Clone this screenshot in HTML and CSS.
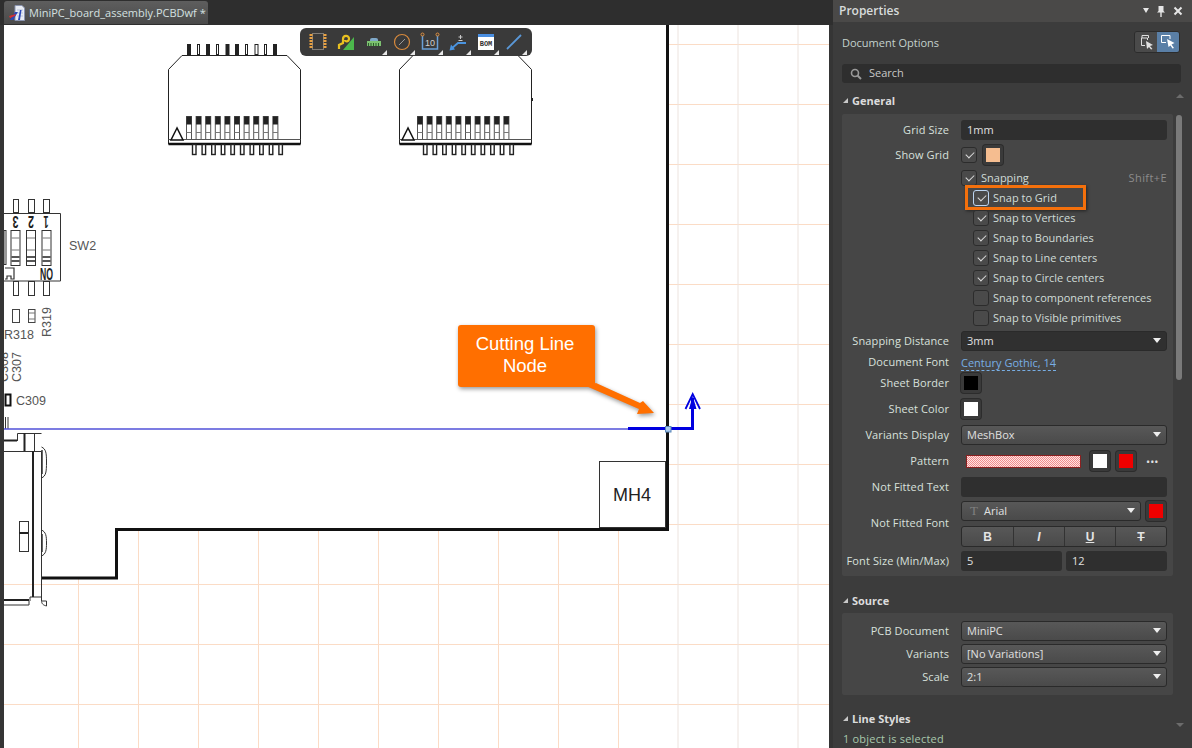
FILE: index.html
```html
<!DOCTYPE html>
<html lang="en">
<head>
  <meta charset="UTF-8" />
  <title>MiniPC_board_assembly.PCBDwf</title>
  <link rel="stylesheet" href="styles.css">
</head>
<body>
<div class="app">

  <div class="editor">
    <div class="tabbar">
      <div class="tab">
        <svg class="tab-icon" width="16" height="16" viewBox="0 0 16 16">
          <path d="M6 0.500h7l2.500 2.500v12.500h-9.500z" fill="#e8ecf4" stroke="#8a94b0"/>
          <path d="M8 5h6M8 8h6M8 11h6" stroke="#b8c4dc"/>
          <path d="M1 15 L6 7 L9 7 L4 15z" fill="#2a48b8"/>
          <path d="M0 11 L7 9 L6 11 L1 13z" fill="#d83030"/>
          <path d="M9 15 L11 5 L12.500 5 L11 15z" fill="#2a48b8"/>
        </svg>
        <span>MiniPC_board_assembly.PCBDwf *</span>
      </div>
    </div>

    <div class="canvas">
      <svg class="sheet" width="825" height="723" viewBox="4 25 825 723">
        <defs>
          <g id="conn">
            <path d="M182 55.500H287L300.500 69.500V144H168.500V69.500z" fill="#fff" stroke="#222" stroke-width="1"/>
            <path d="M168.500 139.500H300.500" stroke="#555" stroke-width="1"/>
            <path d="M168.500 144H300.500" stroke="#111" stroke-width="2.500"/>
            <path d="M177 128L171 140H183z" fill="#fff" stroke="#111" stroke-width="1.500"/>
            <g fill="#fff" stroke="#222" stroke-width="1">
              <rect x="187.500" y="44.500" width="3" height="10" fill="#222"/>
              <rect x="197.500" y="44.500" width="2" height="10"/>
              <rect x="206.500" y="44.500" width="3" height="10" fill="#222"/>
              <rect x="216.500" y="44.500" width="2" height="10"/>
              <rect x="226" y="44.500" width="3" height="10" fill="#222"/>
              <rect x="235.500" y="44.500" width="3" height="10" fill="#222"/>
              <rect x="245.500" y="44.500" width="2" height="10"/>
              <rect x="255" y="44.500" width="3" height="10"/>
              <rect x="264.500" y="44.500" width="2" height="10"/>
              <rect x="273.500" y="44.500" width="3" height="10" fill="#222"/>
            </g>
            <g id="low-pin">
              <rect x="186.500" y="116.500" width="5" height="23" fill="#fff" stroke="#555"/>
              <rect x="186.500" y="116.500" width="5" height="8" fill="#222"/>
              <path d="M186.500 132.500H191.500" stroke="#777"/>
              <rect x="192.500" y="144.500" width="3.500" height="10" fill="#fff" stroke="#222" stroke-width="1.400"/>
            </g>
            <use href="#low-pin" x="9.600"/>
            <use href="#low-pin" x="19.200"/>
            <use href="#low-pin" x="28.800"/>
            <use href="#low-pin" x="38.400"/>
            <use href="#low-pin" x="48"/>
            <use href="#low-pin" x="57.600"/>
            <use href="#low-pin" x="67.200"/>
            <use href="#low-pin" x="76.800"/>
            <use href="#low-pin" x="86.400"/>
          </g>
          <g id="dip">
            <rect x="-4.500" y="0.500" width="9" height="35" fill="#fff" stroke="#333"/>
            <path d="M-4 8H4M-4 20H4" stroke="#777"/>
            <path d="M-4 27H4M-4 31H4" stroke="#222" stroke-width="1.500"/>
          </g>
        </defs>

        <!-- grid -->
        <rect x="4" y="25" width="825" height="723" fill="#fff"/>
        <g class="grid">
          <path d="M4 44.500H829M4 104.500H829M4 164.500H829M4 224.500H829M4 284.500H829M4 344.500H829M4 404.500H829M4 464.500H829M4 524.500H829M4 584.500H829M4 644.500H829M4 704.500H829"/>
          <path d="M78.500 25V748M138.500 25V748M198.500 25V748M258.500 25V748M318.500 25V748M378.500 25V748M438.500 25V748M498.500 25V748M558.500 25V748M618.500 25V748"/>
        </g>
        <path class="grid-pale" d="M678 25V748M738 25V748M798 25V748"/>
        <path d="M4 25H667V530H117V578H4z" fill="#fff"/>

        <!-- connectors -->
        <use href="#conn"/>
        <use href="#conn" x="231"/>
        <rect x="531" y="98" width="2" height="3" fill="#222"/>

        <!-- SW2 -->
        <path d="M4 213.500H60.500V281H4" fill="#fff" stroke="#333"/>
        <g fill="#fff" stroke="#333">
          <rect x="13.500" y="199.500" width="5" height="13"/>
          <rect x="28.500" y="199.500" width="6" height="13"/>
          <rect x="43.500" y="199.500" width="6" height="13"/>
          <rect x="13.500" y="281.500" width="5" height="14"/>
          <rect x="28.500" y="281.500" width="6" height="14"/>
          <rect x="43.500" y="281.500" width="6" height="14"/>
          <rect x="4" y="230.500" width="2" height="34"/>
        </g>
        <use href="#dip" x="15.500" y="230"/>
        <use href="#dip" x="31" y="230"/>
        <use href="#dip" x="46.500" y="230"/>
        <text class="pcb-bold" transform="rotate(180 15.500 222)" x="15.500" y="228" textLength="6" lengthAdjust="spacingAndGlyphs">3</text>
        <text class="pcb-bold" transform="rotate(180 31 222)" x="31" y="228" textLength="6" lengthAdjust="spacingAndGlyphs">2</text>
        <text class="pcb-bold" transform="rotate(180 46 222)" x="46" y="228" textLength="5" lengthAdjust="spacingAndGlyphs">1</text>
        <text class="pcb-bold" transform="rotate(180 46.500 273.500)" x="46.500" y="279" textLength="13" lengthAdjust="spacingAndGlyphs">ON</text>
        <path d="M5 268H14V279H11V276H7V279H5" fill="none" stroke="#333" stroke-width="1.200"/>
        <text class="pcb" x="69" y="250">SW2</text>

        <!-- resistors and caps -->
        <rect x="12.500" y="309.500" width="7" height="13" fill="#fff" stroke="#444"/>
        <rect x="28.500" y="309.500" width="6.500" height="13" fill="#fff" stroke="#444"/>
        <path d="M29 313H35M29 319H35" stroke="#777"/>
        <text class="pcb" x="4" y="339">R318</text>
        <text class="pcb" transform="rotate(-90 51 337)" x="51" y="337">R319</text>
        <text class="pcb" transform="rotate(-90 21 382)" x="21" y="382">C307</text>
        <text class="pcb" transform="rotate(-90 8 382)" x="8" y="382">C308</text>
        <rect x="5.500" y="394.500" width="5" height="11" fill="#fff" stroke="#111" stroke-width="2"/>
        <text class="pcb" x="16" y="405">C309</text>

        <!-- mechanical part -->
        <g fill="none" stroke="#333">
          <path d="M5.500 417V429M8 417V429"/>
          <path d="M4 451.500H41.500V597M17.500 441V433.500H41.500M34.500 433.500V451"/>
          <path d="M41.500 447C46 449 46.500 453 46.500 462C46.500 472 46 476 41.500 478"/>
          <path d="M41.500 530C46 532 46.500 536 46.500 543C46.500 550 46 554 41.500 556"/>
          <rect x="19.500" y="521.500" width="9" height="30"/>
          <path d="M30 601V597H41.500V600C41.500 604 43 605 46.500 606V601H42"/>
          <path d="M4 605H29V601"/>
        </g>
        <path d="M4 440.500H17M24.500 433V451M33 451V597M19 533H28M4 600H29" fill="none" stroke="#222" stroke-width="2"/>
        <path d="M42 450V474M42 534V552" stroke="#333" stroke-width="1.500"/>

        <!-- board outline -->
        <path d="M667.500 25V529.500H116.500V578H42" fill="none" stroke="#111" stroke-width="3"/>

        <!-- MH4 -->
        <rect x="599.500" y="461.500" width="66" height="66" fill="#fff" stroke="#333"/>
        <text class="mh" x="632" y="501">MH4</text>

        <!-- cutting line -->
        <path d="M4 429H628" stroke="#5050d8" stroke-width="1.600"/>
        <path d="M628 428.500H692.500V398" fill="none" stroke="#0000e0" stroke-width="3"/>
        <path d="M685.500 409L692.700 394L700 409" fill="none" stroke="#0000e0" stroke-width="1.800"/>
        <path d="M692.700 396L689 409H696.500z" fill="#0000e0"/>
        <rect x="665.500" y="426.500" width="5.500" height="5.500" fill="#a9c9ee" stroke="#5a86b8"/>

        <!-- callout -->
        <g class="callout">
          <rect x="458" y="325" width="137" height="62" rx="3"/>
          <path d="M586 386L596 383L640 403L643 401L654 413L637 414L639 409z"/>
        </g>
        <text class="callout-text" x="525" y="350">Cutting Line</text>
        <text class="callout-text" x="525" y="372">Node</text>
      </svg>

      <div class="toolbar">
        <button class="tool">
          <svg width="20" height="20" viewBox="0 0 20 20">
            <rect x="4.500" y="1.500" width="11" height="16" fill="none" stroke="#807d78"/>
            <path d="M3 2v15M17 2v15" stroke="#e8a040" stroke-width="3" stroke-dasharray="2 1"/>
          </svg>
        </button>
        <button class="tool">
          <svg width="20" height="20" viewBox="0 0 20 20">
            <path d="M18 5V18H7z" fill="#4cb84c"/>
            <path d="M3 17V13L7 11V7C7 3 13 3 13 6.500C13 10 9 10 9 8" fill="none" stroke="#e8c020" stroke-width="2.200"/>
          </svg>
        </button>
        <button class="tool has-menu">
          <svg width="20" height="20" viewBox="0 0 20 20">
            <path d="M6 9V7.500Q6 6 8 6H12Q14 6 14 7.500V9z" fill="#7fa8c8"/>
            <rect x="3" y="9" width="14" height="5" fill="#7cc070"/>
            <path d="M4.500 11v3M7 11v3M9.500 11v3M12 11v3M14.500 11v3" stroke="#2a5a2a"/>
          </svg>
        </button>
        <button class="tool has-menu">
          <svg width="20" height="20" viewBox="0 0 20 20">
            <circle cx="10" cy="10" r="7.500" fill="none" stroke="#d88a3c" stroke-width="1.200"/>
            <path d="M7 13L13 7" stroke="#9a9a9a"/>
          </svg>
        </button>
        <button class="tool has-menu">
          <svg width="22" height="20" viewBox="0 0 22 20">
            <path d="M3.500 3V17H18.500V3" fill="none" stroke="#6aa0d8" stroke-width="1.500"/>
            <circle cx="3.500" cy="2.500" r="1.500" fill="#3a3a3a" stroke="#e09040"/>
            <circle cx="18.500" cy="2.500" r="1.500" fill="#3a3a3a" stroke="#e09040"/>
            <text class="tool-num" x="11" y="14">10</text>
          </svg>
        </button>
        <button class="tool has-menu">
          <svg width="20" height="20" viewBox="0 0 20 20">
            <path d="M3 17L10 11H18" fill="none" stroke="#4a94e0" stroke-width="1.800"/>
            <path d="M1.500 18.500L3 12.500L7 17.500z" fill="#4a94e0"/>
            <path d="M12.500 3V7M10.500 5H14.500M10.500 8.500H14.500" stroke="#c8c8c8"/>
          </svg>
        </button>
        <button class="tool has-menu">
          <svg width="20" height="20" viewBox="0 0 20 20">
            <rect x="2" y="2" width="16" height="16" fill="#fff"/>
            <rect x="2" y="2" width="16" height="3" fill="#4a8ee0"/>
            <text class="tool-bom" x="10" y="14">BOM</text>
          </svg>
        </button>
        <button class="tool has-menu">
          <svg width="20" height="20" viewBox="0 0 20 20">
            <path d="M3 17L17 3" stroke="#5a98d8" stroke-width="1.800"/>
          </svg>
        </button>
      </div>
    </div>
  </div>

  <aside class="panel">
    <header class="panel-title">
      <span>Properties</span>
      <div class="panel-actions">
        <i class="caret-white"></i>
        <svg width="10" height="12" viewBox="0 0 10 12"><path d="M2.500 1H7.500V6L9 7.500H1L2.500 6zM4.300 7.500H5.700V12H4.300z" fill="#e6e6e6"/></svg>
        <svg width="10" height="10" viewBox="0 0 10 10"><path d="M1.500 1.500L8.500 8.500M8.500 1.500L1.500 8.500" stroke="#e6e6e6" stroke-width="2"/></svg>
      </div>
    </header>

    <div class="doc-options">
      <span>Document Options</span>
      <div class="toggle">
        <button class="toggle-btn">
          <svg width="16" height="16" viewBox="0 0 16 16">
            <path d="M4 4V1.500H10.500V4M3.500 4H9.500V6M3.500 4V11.500H7" fill="none" stroke="#e0e0e0"/>
            <path d="M8 7L15 11L12 12L14.500 15L13 15.500L11 13L9 15z" fill="#e0e0e0"/>
          </svg>
        </button>
        <button class="toggle-btn active">
          <svg width="16" height="16" viewBox="0 0 16 16">
            <path d="M6 8.500H1.500V1.500H10V5" fill="none" stroke="#fff"/>
            <path d="M7 5L14.500 9L11.500 10.500L14 14L12.500 14.500L10.500 11.500L8.500 13z" fill="#fff"/>
          </svg>
        </button>
      </div>
    </div>

    <div class="search">
      <svg width="12" height="12" viewBox="0 0 12 12"><circle cx="5" cy="5" r="3.500" fill="none" stroke="#9a9a9a" stroke-width="1.600"/><path d="M7.500 7.500L11 11" stroke="#9a9a9a" stroke-width="2"/></svg>
      <span>Search</span>
    </div>

    <div class="sec-head head-first"><i class="tri"></i>General</div>
    <section class="sec sec-general">
      <div class="row">
        <label>Grid Size</label>
        <div class="input">1mm</div>
      </div>
      <div class="row row-showgrid">
        <label>Show Grid</label>
        <div class="inline">
          <span class="check on"></span>
          <span class="swatch sw-grid"></span>
        </div>
      </div>
      <div class="row row-snapping">
        <label></label>
        <div class="inline">
          <span class="check on"></span>
          <span class="check-text">Snapping</span>
          <span class="shortcut">Shift+E</span>
        </div>
      </div>
      <div class="snap-list">
        <div class="snap focused"><span class="check on focus"></span><span class="check-text">Snap to Grid</span></div>
        <div class="snap"><span class="check on"></span><span class="check-text">Snap to Vertices</span></div>
        <div class="snap"><span class="check on"></span><span class="check-text">Snap to Boundaries</span></div>
        <div class="snap"><span class="check on"></span><span class="check-text">Snap to Line centers</span></div>
        <div class="snap"><span class="check on"></span><span class="check-text">Snap to Circle centers</span></div>
        <div class="snap"><span class="check"></span><span class="check-text">Snap to component references</span></div>
        <div class="snap"><span class="check"></span><span class="check-text">Snap to Visible primitives</span></div>
      </div>
      <div class="row">
        <label>Snapping Distance</label>
        <div class="select dark">3mm</div>
      </div>
      <div class="row row-font">
        <label>Document Font</label>
        <div><a class="link">Century Gothic, 14</a></div>
      </div>
      <div class="row">
        <label>Sheet Border</label>
        <div class="inline"><span class="swatch sw-black"></span></div>
      </div>
      <div class="row">
        <label>Sheet Color</label>
        <div class="inline"><span class="swatch sw-white"></span></div>
      </div>
      <div class="row">
        <label>Variants Display</label>
        <div class="select">MeshBox</div>
      </div>
      <div class="row">
        <label>Pattern</label>
        <div class="pattern-row">
          <span class="pattern"></span>
          <span class="swatch sw-white"></span>
          <span class="swatch sw-red"></span>
          <span class="dots">•••</span>
        </div>
      </div>
      <div class="row">
        <label>Not Fitted Text</label>
        <div class="input"></div>
      </div>
      <div class="row row-fitted">
        <label>Not Fitted Font</label>
        <div class="fitted">
          <div class="inline font-line">
            <div class="select font-select"><span class="t-icon">T</span>Arial</div>
            <span class="swatch sw-red"></span>
          </div>
          <div class="btn-group">
            <span class="b">B</span>
            <span class="i">I</span>
            <span class="u">U</span>
            <span class="s">T</span>
          </div>
        </div>
      </div>
      <div class="row">
        <label>Font Size (Min/Max)</label>
        <div class="two">
          <div class="input">5</div>
          <div class="input">12</div>
        </div>
      </div>
    </section>

    <div class="sec-head sec-gap"><i class="tri"></i>Source</div>
    <section class="sec sec-source">
      <div class="row row-src">
        <label>PCB Document</label>
        <div class="select">MiniPC</div>
      </div>
      <div class="row row-src">
        <label>Variants</label>
        <div class="select">[No Variations]</div>
      </div>
      <div class="row row-src">
        <label>Scale</label>
        <div class="select">2:1</div>
      </div>
    </section>

    <div class="sec-head head-last"><i class="tri"></i>Line Styles</div>

    <footer class="status">1 object is selected</footer>

    <div class="scroll-up"></div>
    <div class="scroll-thumb"></div>
    <div class="scroll-down"></div>
  </aside>

</div>
</body>
</html>
```

FILE: styles.css
```css
* {
  box-sizing: border-box;
}
html, body {
  margin: 0;
  padding: 0;
  height: 748px;
  overflow: hidden;
  background: #333;
}
body {
  font-family: "Open Sans", "Noto Sans", sans-serif;
  font-size: 11px;
  color: #dcdcdc;
}
.app {
  display: flex;
  width: 1192px;
  height: 748px;
}

/* editor side */
.editor {
  width: 833px;
  display: flex;
  flex-direction: column;
  padding-left: 4px;
  padding-right: 4px;
  background: #353535;
}
.tabbar {
  height: 25px;
  padding-top: 1px;
  margin-left: -4px;
  padding-left: 4px;
  margin-right: -4px;
  background: #2e2e2e;
}
.tab {
  width: 204px;
  height: 23px;
  display: flex;
  align-items: center;
  gap: 4px;
  padding-left: 5px;
  background: linear-gradient(#5e5e5e, #4a4a4a);
  border-radius: 3px 3px 0 0;
  color: #d4e0e0;
  font-size: 11px;
  white-space: nowrap;
}
.tab-icon {
  flex: none;
}
.canvas {
  position: relative;
  width: 825px;
  height: 723px;
}
.sheet {
  display: block;
}
.grid path {
  fill: none;
  stroke: #fbdcc6;
  stroke-width: 1;
}
.grid-pale {
  fill: none;
  stroke: #ece3de;
  stroke-width: 1;
}
.pcb {
  font-family: "Liberation Sans", sans-serif;
  font-size: 12.5px;
  fill: #555;
}
.pcb-bold {
  font-family: "Liberation Sans", sans-serif;
  font-size: 16px;
  font-weight: bold;
  fill: #222;
  text-anchor: middle;
}
.mh {
  font-family: "Liberation Sans", sans-serif;
  font-size: 18px;
  fill: #222;
  text-anchor: middle;
}
.callout {
  fill: #ff6f00;
  filter: drop-shadow(1px 2px 2px rgba(0,0,0,0.4));
}
.callout-text {
  font-family: "Liberation Sans", sans-serif;
  font-size: 18.5px;
  fill: #fff;
  text-anchor: middle;
}

/* floating toolbar */
.toolbar {
  position: absolute;
  left: 296px;
  top: 3px;
  width: 232px;
  height: 28px;
  display: flex;
  align-items: center;
  justify-content: center;
  background: #3a3a3a;
  border-radius: 6px;
}
.tool {
  position: relative;
  width: 28px;
  height: 28px;
  padding: 0 0 1px;
  border: none;
  background: none;
  display: flex;
  align-items: center;
  justify-content: center;
}
.has-menu::after {
  content: "";
  position: absolute;
  right: 1px;
  bottom: 1px;
  border-style: solid;
  border-width: 0 0 5px 5px;
  border-color: transparent transparent #e8e8e8 transparent;
}
.tool-num {
  font-family: "Liberation Sans", sans-serif;
  font-size: 9px;
  fill: #d0d0d0;
  text-anchor: middle;
}
.tool-bom {
  font-family: "Liberation Mono", monospace;
  font-size: 7px;
  font-weight: bold;
  fill: #333;
  text-anchor: middle;
}

/* properties panel */
.panel {
  position: relative;
  width: 359px;
  height: 748px;
  display: flex;
  flex-direction: column;
  background: #3c3c3c;
  padding-left: 9px;
  overflow: hidden;
}
.panel-title {
  height: 22px;
  margin-left: -9px;
  padding: 0 9px 1px 6px;
  display: flex;
  align-items: center;
  justify-content: space-between;
  background: #4a4948;
  font-size: 12px;
  font-weight: 600;
  color: #d8dcdc;
}
.panel-actions {
  display: flex;
  align-items: center;
  gap: 7px;
}
.caret-white {
  display: block;
  border-style: solid;
  border-width: 5px 3.5px 0 3.5px;
  border-color: #e6e6e6 transparent transparent transparent;
}
.doc-options {
  height: 42px;
  padding-right: 12px;
  padding-bottom: 2px;
  display: flex;
  align-items: center;
  justify-content: space-between;
  color: #c4d2ce;
  font-size: 11px;
}
.toggle {
  display: flex;
  width: 46px;
  height: 22px;
  border: 1px solid #2c2c2c;
  border-radius: 3px;
  overflow: hidden;
}
.toggle-btn {
  flex: 1;
  padding: 0;
  border: none;
  background: #4a4a4a;
  display: flex;
  align-items: center;
  justify-content: center;
}
.toggle-btn.active {
  background: #5a7fa6;
}
.search {
  width: 339px;
  height: 19px;
  display: flex;
  align-items: center;
  gap: 7px;
  padding-left: 8px;
  background: #2e2e2e;
  border-radius: 3px;
  color: #c8c8c8;
}
.search span {
  padding-bottom: 2px;
}
.sec-head {
  height: 25px;
  display: flex;
  align-items: center;
  gap: 4px;
  padding-left: 1px;
  font-weight: 700;
  color: #dcdcdc;
}
.head-first {
  margin-top: 5px;
  height: 26px;
  padding-bottom: 2px;
}
.sec-head.sec-gap {
  margin-top: 12px;
}
.head-last {
  margin-top: 11px;
}
.tri {
  display: block;
  border-style: solid;
  border-width: 0 0 5px 5px;
  border-color: transparent transparent #c8c8c8 transparent;
}
.sec {
  width: 331px;
  background: #464646;
  border-radius: 2px;
}
.sec-general {
  height: 462px;
  padding-top: 3px;
}
.sec-source {
  height: 82px;
  padding-top: 6px;
}
.row {
  display: grid;
  grid-template-columns: 107px 206px;
  column-gap: 12px;
  align-items: center;
  height: 26px;
}
.row label {
  text-align: right;
  color: #d8e0dc;
  white-space: nowrap;
  letter-spacing: 0.1px;
  padding-bottom: 2px;
}
.row-showgrid {
  height: 24px;
}
.row-snapping {
  height: 21px;
}
.row-snapping .check-text,
.row-snapping .shortcut {
  padding-bottom: 0;
}
.row-font {
  height: 16px;
}
.row-fitted {
  height: 48px;
}
.row-fitted label {
  padding-bottom: 3px;
}
.row-src {
  height: 23px;
}
.row-src label {
  padding-bottom: 0;
}
.inline {
  display: flex;
  align-items: center;
  gap: 6px;
}
.input {
  height: 20px;
  line-height: 19px;
  padding-left: 6px;
  background: #2f2f2f;
  border-radius: 3px;
  color: #e0e0e0;
}
.select {
  position: relative;
  height: 20px;
  line-height: 17px;
  padding-left: 5px;
  background: linear-gradient(#585858, #4a4a4a);
  border: 1px solid #2a2a2a;
  border-radius: 3px;
  color: #e0e0e0;
}
.select.dark {
  background: #303030;
}
.select::after {
  content: "";
  position: absolute;
  right: 5px;
  top: 6px;
  border-style: solid;
  border-width: 5px 4px 0 4px;
  border-color: #eee transparent transparent transparent;
}
.check {
  display: inline-block;
  position: relative;
  width: 16px;
  height: 16px;
  flex: none;
  background: #4a4a4a;
  border: 1px solid #2c2c2c;
  border-radius: 3px;
}
.check.on::after {
  content: "";
  position: absolute;
  left: 3.500px;
  top: 2px;
  width: 7px;
  height: 4px;
  transform: rotate(-45deg) translate(-1px, 1px);
  transform-origin: center;
  border-left: 1.300px solid #dcdcdc;
  border-bottom: 1.300px solid #dcdcdc;
}
.check.focus {
  border-color: #bcd4f0;
}
.check-text {
  color: #d0dcd8;
  padding-bottom: 2px;
}
.shortcut {
  margin-left: auto;
  padding-bottom: 2px;
  color: #8c8c8c;
  letter-spacing: 0.4px;
}
.row-snapping .inline {
  gap: 4px;
}
.snap-list {
  padding-left: 131px;
}
.snap {
  position: relative;
  height: 20px;
  display: flex;
  align-items: center;
  gap: 4px;
}
/* orange annotation round the first option */
.snap.focused::before {
  content: "";
  position: absolute;
  left: -8px;
  top: -3px;
  width: 121px;
  height: 25px;
  box-sizing: border-box;
  border: 3px solid #f4700c;
  box-shadow: 1px 1px 3px rgba(0,0,0,0.5);
}
.swatch {
  display: block;
  flex: none;
  width: 20px;
  height: 20px;
  border: 3px solid #3a3a3a;
  border-radius: 3px;
  box-shadow: 0 0 0 1px #2c2c2c;
}
.sw-grid {
  background: #f5bd90;
}
.sw-black {
  background: #000;
}
.sw-white {
  background: #fff;
}
.sw-red {
  background: #f00000;
}
.link {
  color: #78aee4;
  border-bottom: 1px dashed #78aee4;
}
.pattern-row {
  display: flex;
  align-items: center;
  height: 22px;
  padding-left: 5px;
}
.pattern {
  width: 115px;
  height: 13px;
  border: 1px solid #8a2020;
  background: repeating-conic-gradient(#f08c8c 0 25%, #ffe4e4 0 50%) 0 0 / 2px 2px;
  margin-right: 9px;
}
.pattern-row .swatch + .swatch {
  margin-left: 6px;
}
.dots {
  margin-left: 10px;
  font-size: 11px;
  color: #e0e0e0;
}
.fitted {
  display: flex;
  flex-direction: column;
  gap: 5px;
}
.font-select {
  width: 180px;
  padding-left: 8px;
}
.font-line {
  gap: 5px;
}
.t-icon {
  font-family: "Liberation Serif", serif;
  font-size: 13px;
  color: #808080;
  margin-right: 6px;
}
.btn-group {
  display: grid;
  grid-template-columns: repeat(4, 1fr);
  height: 21px;
  border: 1px solid #2a2a2a;
  border-radius: 3px;
  background: linear-gradient(#585858, #4a4a4a);
  font-family: "Liberation Sans", sans-serif;
  font-size: 12px;
  font-weight: bold;
  color: #e4e4e4;
}
.btn-group span {
  display: flex;
  align-items: center;
  justify-content: center;
  border-left: 1px solid #333;
}
.btn-group span:first-child {
  border-left: none;
}
.btn-group .i {
  font-style: italic;
}
.btn-group .u {
  text-decoration: underline;
}
.btn-group .s {
  text-decoration: line-through;
}
.two {
  display: grid;
  grid-template-columns: 101px 101px;
  column-gap: 4px;
}
.status {
  position: absolute;
  left: 10px;
  bottom: 2px;
  color: #a8c8ac;
  letter-spacing: 0.2px;
}
.scroll-thumb {
  position: absolute;
  left: 343px;
  top: 115px;
  width: 6px;
  height: 265px;
  background: #7a7a7a;
  border-radius: 3px;
}
.scroll-up,
.scroll-down {
  position: absolute;
  left: 343px;
  border-style: solid;
  border-width: 0 4px 4px 4px;
  border-color: transparent transparent #6c6c6c transparent;
}
.scroll-up {
  top: 94px;
}
.scroll-down {
  top: 723px;
  border-width: 4px 4px 0 4px;
  border-color: #6c6c6c transparent transparent transparent;
}
```
